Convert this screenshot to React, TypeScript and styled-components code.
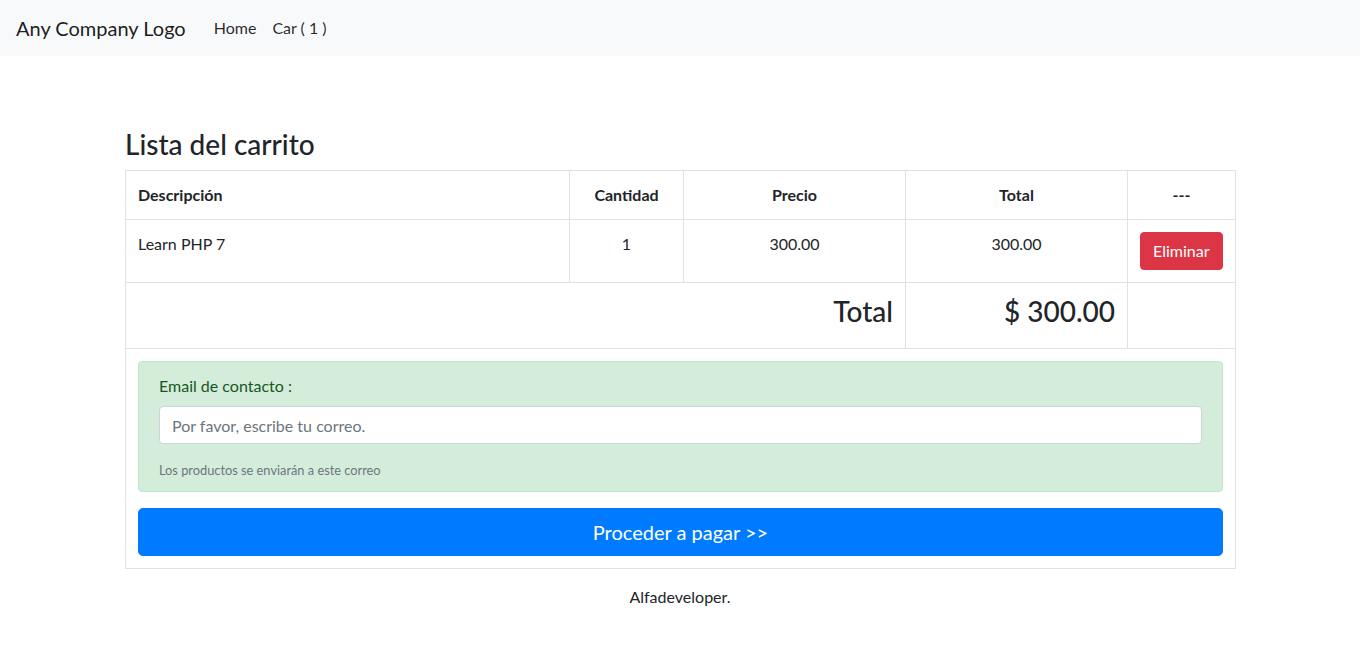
import React from "react";
import styled, { createGlobalStyle } from "styled-components";

const GlobalStyle = createGlobalStyle`
  html, body { margin: 0; padding: 0; background: #fff; }
  body {
    font-family: Lato, "Noto Sans", sans-serif;
    font-size: 16px;
    line-height: 1.5;
    color: #212529;
  }
  * { box-sizing: border-box; }
`;

const Navbar = styled.nav`
  display: flex;
  align-items: center;
  height: 56px;
  padding: 8px 16px;
  background: #f8f9fa;
`;

const Brand = styled.a`
  font-size: 20px;
  line-height: 30px;
  padding: 5px 0;
  margin-right: 20px;
  color: rgba(0, 0, 0, 0.9);
  text-decoration: none;
`;

const NavLink = styled.a`
  padding: 8px;
  color: rgba(0, 0, 0, 0.85);
  text-decoration: none;
`;

const Container = styled.main`
  width: 1110px;
  margin: 72px auto 0;
`;

const Heading = styled.h3<{ $align?: string }>`
  font-size: 28px;
  font-weight: 500;
  line-height: 1.2;
  margin: 0 0 8px;
  text-align: ${(p) => p.$align || "left"};
`;

const Table = styled.table`
  width: 1110px;
  border-collapse: collapse;
  border: 1px solid #dee2e6;
  margin-bottom: 16px;
  table-layout: fixed;
`;

const Th = styled.th<{ $align?: string; $w?: number }>`
  padding: 12px;
  border: 1px solid #dee2e6;
  text-align: ${(p) => p.$align || "center"};
  font-weight: 700;
  vertical-align: top;
  width: ${(p) => (p.$w ? `${p.$w}px` : "auto")};
`;

const Td = styled.td<{ $align?: string }>`
  padding: 12px;
  border: 1px solid #dee2e6;
  text-align: ${(p) => p.$align || "center"};
  vertical-align: top;
`;

const DangerButton = styled.button`
  font-family: inherit;
  font-size: 16px;
  line-height: 24px;
  padding: 6px 12px;
  border: 1px solid #dc3545;
  border-radius: 4px;
  background: #dc3545;
  color: #fff;
  cursor: pointer;
`;

const Alert = styled.div`
  background: #d4edda;
  border: 1px solid #c3e6cb;
  color: #155724;
  border-radius: 4px;
  padding: 12px 20px 11px;
  margin-bottom: 16px;
  text-align: left;
`;

const Label = styled.label`
  display: block;
  margin-bottom: 8px;
`;

const Input = styled.input`
  display: block;
  width: 100%;
  height: 38px;
  padding: 6px 12px;
  font-family: inherit;
  font-size: 16px;
  color: #495057;
  background: #fff;
  border: 1px solid #ced4da;
  border-radius: 4px;
  &::placeholder { color: #6c757d; opacity: 1; }
`;

const Help = styled.small`
  display: block;
  margin-top: 17px;
  font-size: 12.8px;
  line-height: 19.2px;
  color: #6c757d;
`;

const PrimaryButton = styled.button`
  display: block;
  width: 100%;
  font-family: inherit;
  font-size: 20px;
  line-height: 30px;
  padding: 8px 16px;
  border: 1px solid #007bff;
  border-radius: 4.8px;
  background: #007bff;
  color: #fff;
  cursor: pointer;
`;

const Footer = styled.p`
  text-align: center;
  margin: 0;
`;

export default function App() {
  return (
    <>
      <GlobalStyle />
      <Navbar>
        <Brand href="#">Any Company Logo</Brand>
        <NavLink href="#">Home</NavLink>
        <NavLink href="#">Car ( 1 )</NavLink>
      </Navbar>
      <Container>
        <Heading>Lista del carrito</Heading>
        <Table>
          <thead>
            <tr>
              <Th $align="left" $w={444}>Descripción</Th>
              <Th $w={114}>Cantidad</Th>
              <Th $w={222}>Precio</Th>
              <Th $w={222}>Total</Th>
              <Th $w={108}>---</Th>
            </tr>
          </thead>
          <tbody>
            <tr>
              <Td $align="left">Learn PHP 7</Td>
              <Td>1</Td>
              <Td>300.00</Td>
              <Td>300.00</Td>
              <Td $align="left">
                <DangerButton type="button">Eliminar</DangerButton>
              </Td>
            </tr>
            <tr>
              <Td colSpan={3} $align="right">
                <Heading $align="right">Total</Heading>
              </Td>
              <Td $align="right">
                <Heading $align="right">$ 300.00</Heading>
              </Td>
              <Td />
            </tr>
            <tr>
              <Td colSpan={5}>
                <Alert>
                  <Label htmlFor="email">Email de contacto :</Label>
                  <Input id="email" type="email" placeholder="Por favor, escribe tu correo." />
                  <Help>Los productos se enviarán a este correo</Help>
                </Alert>
                <PrimaryButton type="button">Proceder a pagar &gt;&gt;</PrimaryButton>
              </Td>
            </tr>
          </tbody>
        </Table>
        <Footer>Alfadeveloper.</Footer>
      </Container>
    </>
  );
}
